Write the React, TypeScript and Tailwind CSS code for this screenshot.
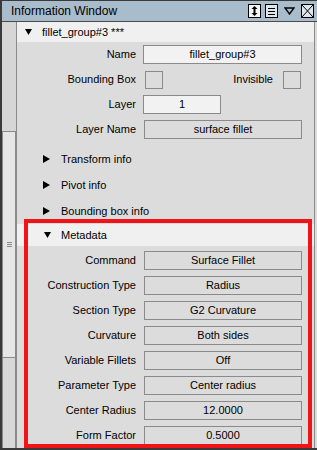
import React from "react";

const font = { fontFamily: '"Liberation Sans", Arial, sans-serif' };

function DownTri({ className = "" }: { className?: string }) {
  return (
    <svg width="7" height="6" viewBox="0 0 7 6" className={className}>
      <polygon points="0,0 7,0 3.5,6" fill="#000" />
    </svg>
  );
}

function RightTri() {
  return (
    <svg width="7" height="8" viewBox="0 0 7 8">
      <polygon points="0,0 7,4 0,8" fill="#000" />
    </svg>
  );
}

function Row({ label, children }: { label: string; children: React.ReactNode }) {
  return (
    <div className="flex h-[25px] items-center">
      <div className="w-[120px] text-right pr-[1px]">{label}</div>
      <div className="ml-[7px] flex items-center">{children}</div>
    </div>
  );
}

function Field({ value, light = false, w = "w-[158px]" }: { value: string; light?: boolean; w?: string }) {
  return (
    <div
      className={`${w} h-[19px] border border-[#8a8a8a] flex items-center justify-center ${
        light ? "bg-[#f2f2f2]" : "bg-[#dcdcdc]"
      }`}
    >
      {value}
    </div>
  );
}

function Section({ label }: { label: string }) {
  return (
    <div className="flex h-[26px] items-center pl-[26px]">
      <RightTri />
      <span className="ml-[11px]">{label}</span>
    </div>
  );
}

const metadata: [string, string][] = [
  ["Command", "Surface Fillet"],
  ["Construction Type", "Radius"],
  ["Section Type", "G2 Curvature"],
  ["Curvature", "Both sides"],
  ["Variable Fillets", "Off"],
  ["Parameter Type", "Center radius"],
  ["Center Radius", "12.0000"],
  ["Form Factor", "0.5000"],
];

export default function App() {
  return (
    <div
      className="relative w-[317px] h-[450px] flex flex-col border-l-2 border-t border-b-2 border-[#3a3a3a] bg-[#dcdcdc] text-[11px] text-black overflow-hidden"
      style={font}
    >
      {/* Title bar */}
      <div className="h-[21px] shrink-0 flex items-center bg-[#a9bccc] border-b border-[#4a4a4a] pl-[9px] pr-[3px]">
        <span className="text-[12px]">Information Window</span>
        <div className="ml-auto flex items-center gap-[4px]">
          <svg width="13" height="14" viewBox="0 0 13 14">
            <rect x="0.5" y="0.5" width="12" height="13" fill="#f4f6f8" stroke="#000" />
            <rect x="5.5" y="4" width="2" height="6" fill="#000" />
            <polygon points="3.5,5 6.5,2 9.5,5" fill="#000" />
            <polygon points="3.5,9 6.5,12 9.5,9" fill="#000" />
          </svg>
          <svg width="13" height="14" viewBox="0 0 13 14">
            <rect x="0.5" y="0.5" width="12" height="13" fill="#dfe6ec" stroke="#000" />
            <line x1="3" y1="4.5" x2="10" y2="4.5" stroke="#000" />
            <line x1="3" y1="7.5" x2="10" y2="7.5" stroke="#000" />
            <line x1="3" y1="10.5" x2="10" y2="10.5" stroke="#000" />
          </svg>
          <svg width="11" height="8" viewBox="0 0 11 8" className="ml-[2px] mr-[2px]">
            <polygon points="1,1 10,1 5.5,7" fill="none" stroke="#000" strokeWidth="1.4" />
          </svg>
          <svg width="13" height="14" viewBox="0 0 13 14">
            <rect x="0.5" y="0.5" width="12" height="13" fill="#dfe6ec" stroke="#000" />
            <line x1="1" y1="1" x2="12" y2="13" stroke="#000" />
            <line x1="12" y1="1" x2="1" y2="13" stroke="#000" />
          </svg>
        </div>
      </div>

      {/* Body */}
      <div className="flex flex-1 min-h-0">
        {/* Scrollbar */}
        <div className="w-[15px] shrink-0 flex flex-col bg-[#d6d6d6] border-r border-[#8a8a8a]">
          <div className="h-[109px] shrink-0" />
          <div className="h-[227px] shrink-0 bg-[#e6e6e6] border border-[#8a8a8a] flex items-center justify-center">
            <div className="flex flex-col gap-[1px]">
              <div className="w-[5px] h-px bg-[#8a8a8a]" />
              <div className="w-[5px] h-px bg-[#8a8a8a]" />
              <div className="w-[5px] h-px bg-[#8a8a8a]" />
            </div>
          </div>
          <div className="flex-1 border-x border-[#8a8a8a] bg-[#d8d8d8]" />
        </div>

        {/* Content */}
        <div className="flex-1 flex flex-col">
          <div className="h-[20px] flex items-center bg-[#f0f0f0] pl-[8px]">
            <DownTri />
            <span className="ml-[10px]">fillet_group#3 ***</span>
          </div>

          <Row label="Name">
            <div className="-ml-px">
              <Field value="fillet_group#3" light w="w-[159px]" />
            </div>
          </Row>
          <div className="flex h-[25px] items-center">
            <div className="w-[120px] text-right pr-[1px]">Bounding Box</div>
            <div className="ml-[8px] w-[18px] h-[18px] border border-[#8a8a8a]" />
            <div className="w-[110px] text-right">Invisible</div>
            <div className="ml-[10px] w-[18px] h-[18px] border border-[#8a8a8a]" />
          </div>
          <Row label="Layer">
            <div className="-ml-px">
              <Field value="1" light w="w-[78px]" />
            </div>
          </Row>
          <Row label="Layer Name">
            <Field value="surface fillet" />
          </Row>

          <div className="h-[4px]" />
          <Section label="Transform info" />
          <Section label="Pivot info" />
          <Section label="Bounding box info" />

          <div className="h-[22px] flex items-center bg-[#f0f0f0] pl-[27px]">
            <DownTri />
            <span className="ml-[10px]">Metadata</span>
          </div>
          <div className="h-[2px]" />
          {metadata.map(([label, value]) => (
            <Row key={label} label={label}>
              <Field value={value} />
            </Row>
          ))}
        </div>

        {/* Right edge */}
        <div className="w-[3px] shrink-0 border-l border-[#8a8a8a]" />
      </div>

      {/* Red highlight annotation */}
      <div className="absolute left-[22px] top-[218px] w-[288px] h-[229px] border-4 border-[#f01418] pointer-events-none" />
    </div>
  );
}
